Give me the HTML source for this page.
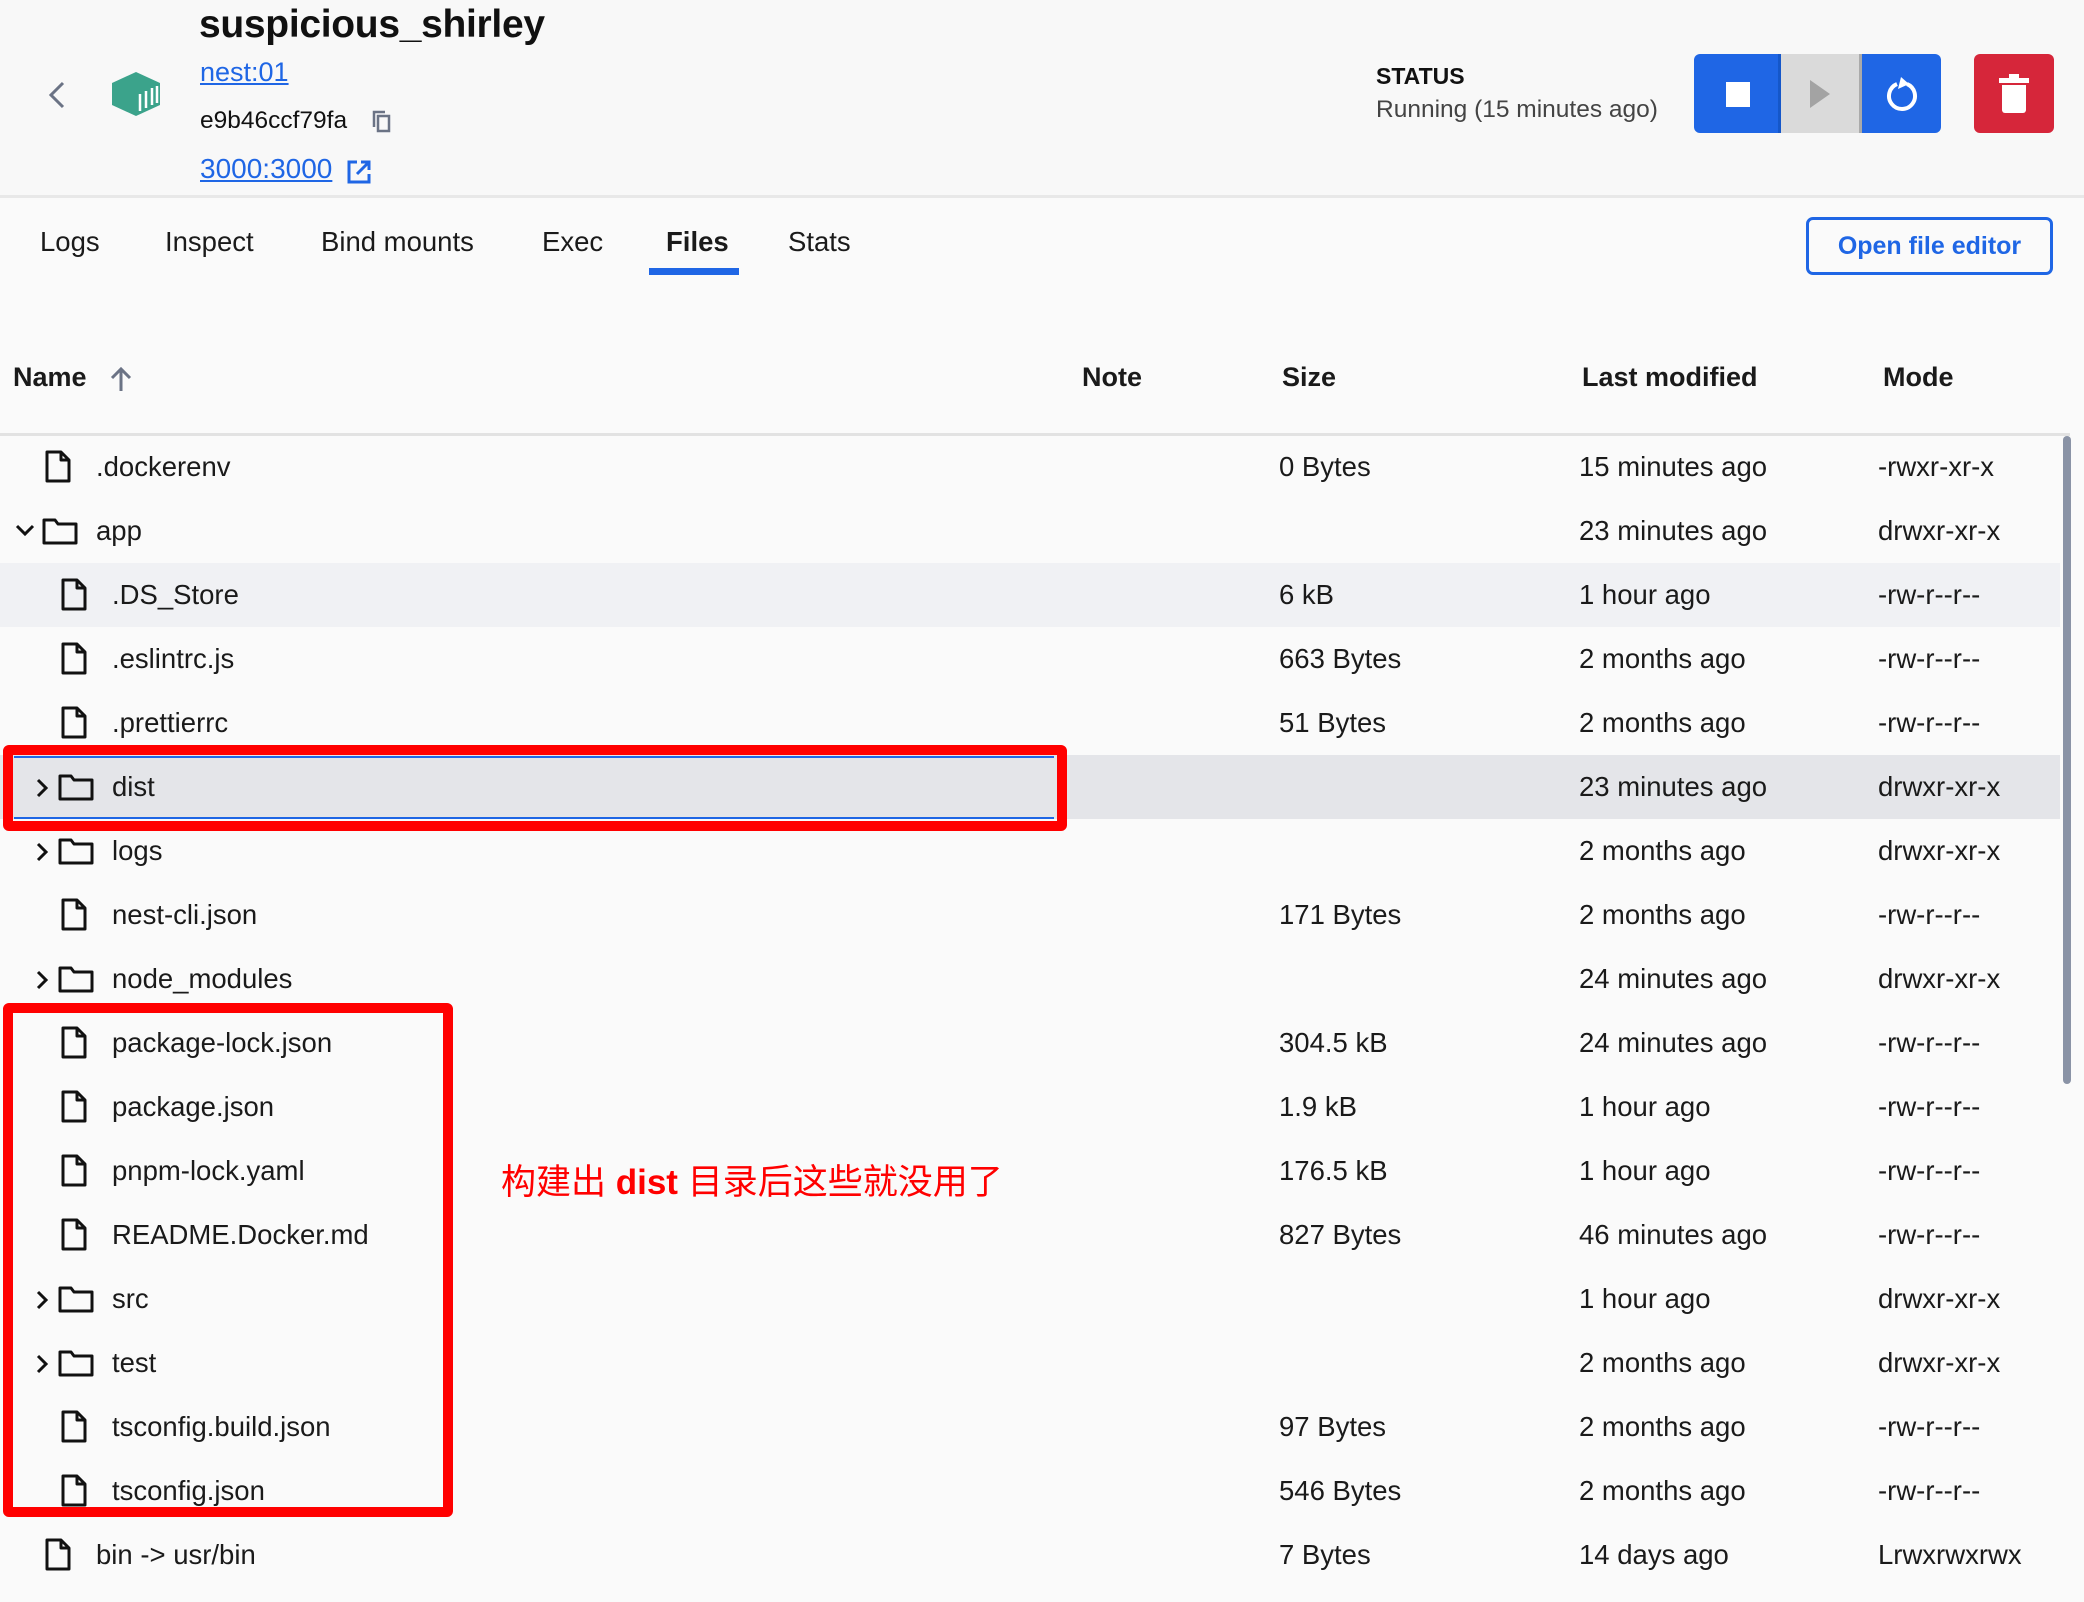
<!DOCTYPE html>
<html><head><meta charset="utf-8"><style>
*{margin:0;padding:0;box-sizing:border-box}
body{width:2084px;height:1602px;background:#fafafa;font-family:"Liberation Sans","Noto Sans CJK SC",sans-serif;color:#1a1a1a;position:relative;overflow:hidden}
.a{position:absolute;white-space:nowrap}
.row{position:absolute;left:0;width:2060px;height:64px;font-size:27.5px;line-height:64px}
.row span{position:absolute;top:0}
.ic{position:absolute;top:17px}
a{color:#1f66e5;text-decoration:underline}
</style></head><body>
<div class="a" style="left:0;top:0;width:2084px;height:198px;background:#f8f8f8;border-bottom:3px solid #e8e8e8"></div>
<svg class="a" style="left:46px;top:80px" width="22" height="30" viewBox="0 0 22 30"><path d="M17 3 L5 15 L17 27" fill="none" stroke="#6b7385" stroke-width="3"/></svg>
<svg class="a" style="left:110px;top:71px" width="52" height="46" viewBox="0 0 52 46"><polygon points="26,1 50,12 50,34 26,45 2,34 2,12" fill="#3ba38b"/><g stroke="#fff" stroke-width="2.5"><line x1="30" y1="23" x2="30" y2="40"/><line x1="36" y1="20" x2="36" y2="37"/><line x1="42" y1="17" x2="42" y2="34"/><line x1="47" y1="15" x2="47" y2="32"/></g></svg>
<div class="a" style="left:199px;top:3px;font-size:39px;font-weight:bold;color:#111;letter-spacing:-0.3px">suspicious_shirley</div>
<div class="a" style="left:200px;top:57px;font-size:27px"><a>nest:01</a></div>
<div class="a" style="left:200px;top:107px;font-size:24.5px;color:#111">e9b46ccf79fa</div>
<svg class="a" style="left:372px;top:110px" width="20" height="24" viewBox="0 0 20 24"><rect x="6" y="6" width="11" height="15" fill="none" stroke="#6b7385" stroke-width="2.5"/><path d="M2 17 V2 H13" fill="none" stroke="#6b7385" stroke-width="2.5"/></svg>
<div class="a" style="left:200px;top:153px;font-size:28px"><a>3000:3000</a></div>
<svg class="a" style="left:346px;top:159px" width="26" height="26" viewBox="0 0 26 26"><path d="M11 3 H3 V23 H23 V15 M15 3 H23 V11 M23 3 L11 15" fill="none" stroke="#1f66e5" stroke-width="3"/></svg>
<div class="a" style="left:1376px;top:63px;font-size:23px;font-weight:bold;color:#111">STATUS</div>
<div class="a" style="left:1376px;top:96px;font-size:24.5px;color:#444">Running (15 minutes ago)</div>
<div class="a" style="left:1694px;top:54px;width:247px;height:79px;border-radius:6px;overflow:hidden;background:#1f66e5">
<div class="a" style="left:84px;top:0;width:84px;height:79px;background:#dadada;border-left:3px solid #1557c9;border-right:3px solid #aaa"></div>
<div class="a" style="left:32px;top:28px;width:24px;height:25px;background:#fff"></div>
<svg class="a" style="left:114px;top:25px" width="24" height="30"><polygon points="2,1 22,15 2,29" fill="#a3a3a3"/></svg>
<svg class="a" style="left:190px;top:21px" width="36" height="40" viewBox="0 0 36 40"><path d="M13 9 A13 13 0 1 0 23 9" fill="none" stroke="#fff" stroke-width="4"/><polygon points="17,2 25,9 14,14" fill="#fff"/></svg>
</div>
<div class="a" style="left:1974px;top:54px;width:80px;height:79px;border-radius:6px;background:#d6263a">
<div class="a" style="left:25px;top:24px;width:30px;height:5px;background:#fff"></div>
<div class="a" style="left:35px;top:20px;width:10px;height:5px;background:#fff"></div>
<div class="a" style="left:28px;top:31px;width:24px;height:28px;background:#fff;border-radius:0 0 3px 3px"></div>
</div>
<div class="a" style="top:226px;font-size:27.5px;left:40px">Logs</div>
<div class="a" style="top:226px;font-size:27.5px;left:165px">Inspect</div>
<div class="a" style="top:226px;font-size:27.5px;left:321px">Bind mounts</div>
<div class="a" style="top:226px;font-size:27.5px;left:542px">Exec</div>
<div class="a" style="top:226px;font-size:27.5px;left:666px;font-weight:bold">Files</div>
<div class="a" style="top:226px;font-size:27.5px;left:788px">Stats</div>
<div class="a" style="left:649px;top:268px;width:90px;height:7px;background:#1f66e5"></div>
<div class="a" style="left:1806px;top:217px;width:247px;height:58px;border:3px solid #1f66e5;border-radius:7px;color:#1f66e5;font-size:25px;font-weight:bold;text-align:center;line-height:52px">Open file editor</div>
<div class="a" style="top:362px;left:13px;font-size:27px;font-weight:bold">Name</div>
<svg class="a" style="left:110px;top:366px" width="22" height="26" viewBox="0 0 22 26"><path d="M11 25 V3 M2 12 L11 3 L20 12" fill="none" stroke="#6b7385" stroke-width="3"/></svg>
<div class="a" style="top:362px;left:1082px;font-size:27px;font-weight:bold">Note</div>
<div class="a" style="top:362px;left:1282px;font-size:27px;font-weight:bold">Size</div>
<div class="a" style="top:362px;left:1582px;font-size:27px;font-weight:bold">Last modified</div>
<div class="a" style="top:362px;left:1883px;font-size:27px;font-weight:bold">Mode</div>
<div class="a" style="left:0;top:433px;width:2070px;height:3px;background:#e2e2e2"></div>
<div class="a" style="left:0;top:563px;width:2060px;height:64px;background:#f0f1f4"></div>
<div class="a" style="left:0;top:755px;width:2060px;height:64px;background:#e4e5e9"></div>
<div class="a" style="left:14px;top:756px;width:1040px;height:2px;background:#1f66e5"></div>
<div class="a" style="left:14px;top:817px;width:1040px;height:2px;background:#1f66e5"></div>
<div class="a" style="left:2063px;top:436px;width:8px;height:648px;background:#8a93a6;border-radius:4px"></div>
<div id="rows"></div>
<script>
var D=[[0,'f','.dockerenv','0 Bytes','15 minutes ago','-rwxr-xr-x'],
[0,'o','app','','23 minutes ago','drwxr-xr-x'],
[1,'f','.DS_Store','6 kB','1 hour ago','-rw-r--r--'],
[1,'f','.eslintrc.js','663 Bytes','2 months ago','-rw-r--r--'],
[1,'f','.prettierrc','51 Bytes','2 months ago','-rw-r--r--'],
[1,'c','dist','','23 minutes ago','drwxr-xr-x'],
[1,'c','logs','','2 months ago','drwxr-xr-x'],
[1,'f','nest-cli.json','171 Bytes','2 months ago','-rw-r--r--'],
[1,'c','node_modules','','24 minutes ago','drwxr-xr-x'],
[1,'f','package-lock.json','304.5 kB','24 minutes ago','-rw-r--r--'],
[1,'f','package.json','1.9 kB','1 hour ago','-rw-r--r--'],
[1,'f','pnpm-lock.yaml','176.5 kB','1 hour ago','-rw-r--r--'],
[1,'f','README.Docker.md','827 Bytes','46 minutes ago','-rw-r--r--'],
[1,'c','src','','1 hour ago','drwxr-xr-x'],
[1,'c','test','','2 months ago','drwxr-xr-x'],
[1,'f','tsconfig.build.json','97 Bytes','2 months ago','-rw-r--r--'],
[1,'f','tsconfig.json','546 Bytes','2 months ago','-rw-r--r--'],
[0,'f','bin -> usr/bin','7 Bytes','14 days ago','Lrwxrwxrwx']];
var file='<svg width="28" height="34" viewBox="0 0 28 34"><path d="M3 2 H17 L25 10 V31 H3 Z M17 2 V10 H25" fill="none" stroke="#111" stroke-width="3" stroke-linejoin="round"/></svg>';
var fold='<svg width="36" height="30" viewBox="0 0 36 30"><path d="M2 4 H13 L16 8 H34 V27 H2 Z" fill="none" stroke="#111" stroke-width="3" stroke-linejoin="round"/></svg>';
var h='';
D.forEach(function(r,i){
 var o=r[0]*16;
 h+='<div class="row" style="top:'+(435+64*i)+'px">';
 if(r[1]=='o')h+='<svg class="ic" style="left:'+(15+o)+'px;top:24px" width="20" height="16"><path d="M2 3 L10 11 L18 3" fill="none" stroke="#111" stroke-width="3"/></svg>';
 if(r[1]=='c')h+='<svg class="ic" style="left:'+(18+o)+'px;top:22px" width="16" height="22"><path d="M4 3 L12 11 L4 19" fill="none" stroke="#111" stroke-width="3"/></svg>';
 h+='<span class="ic" style="left:'+(r[1]=='f'?44+o:42+o)+'px;top:'+(r[1]=='f'?15:17)+'px;line-height:0">'+(r[1]=='f'?file:fold)+'</span>';
 h+='<span style="left:'+(96+o)+'px">'+r[2]+'</span><span style="left:1279px">'+r[3]+'</span><span style="left:1579px">'+r[4]+'</span><span style="left:1878px">'+r[5]+'</span></div>';
});
document.getElementById('rows').innerHTML=h;
</script>
<div class="a" style="left:3px;top:745px;width:1064px;height:86px;border:10px solid #ff0000;border-radius:6px"></div>
<div class="a" style="left:3px;top:1003px;width:450px;height:514px;border:10px solid #ff0000;border-radius:6px"></div>
<div class="a" style="left:501px;top:1154px;font-size:35px;color:#ff0000;font-family:'Liberation Sans','Noto Sans CJK SC',sans-serif">构建出 <b>dist</b> 目录后这些就没用了</div>
</body></html>
